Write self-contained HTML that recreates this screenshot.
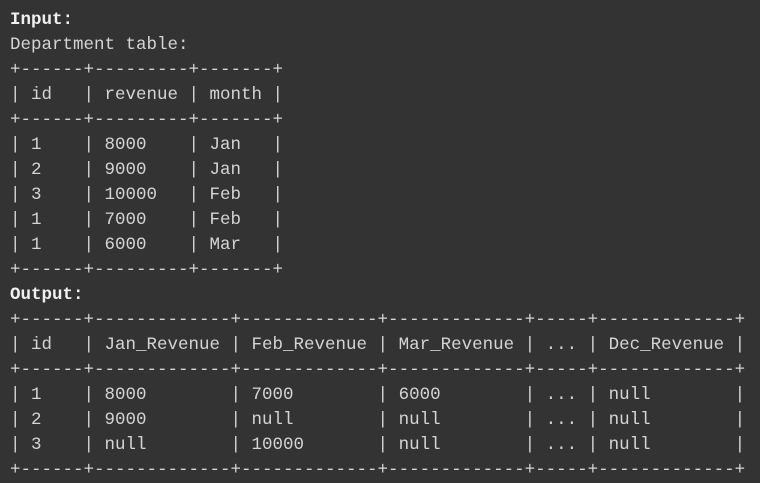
<!DOCTYPE html><html><head><style>
html,body{margin:0;background:#333333;width:760px;height:483px;overflow:hidden}
pre{margin:0;position:absolute;left:10px;top:8px;font-family:"Liberation Mono",monospace;font-size:17.5px;line-height:25px;color:#d4d4d4}
b{color:#f0f0f0}
</style></head><body><pre><b>Input:</b>
Department table:
+------+---------+-------+
| id   | revenue | month |
+------+---------+-------+
| 1    | 8000    | Jan   |
| 2    | 9000    | Jan   |
| 3    | 10000   | Feb   |
| 1    | 7000    | Feb   |
| 1    | 6000    | Mar   |
+------+---------+-------+
<b>Output:</b>
+------+-------------+-------------+-------------+-----+-------------+
| id   | Jan_Revenue | Feb_Revenue | Mar_Revenue | ... | Dec_Revenue |
+------+-------------+-------------+-------------+-----+-------------+
| 1    | 8000        | 7000        | 6000        | ... | null        |
| 2    | 9000        | null        | null        | ... | null        |
| 3    | null        | 10000       | null        | ... | null        |
+------+-------------+-------------+-------------+-----+-------------+</pre></body></html>
